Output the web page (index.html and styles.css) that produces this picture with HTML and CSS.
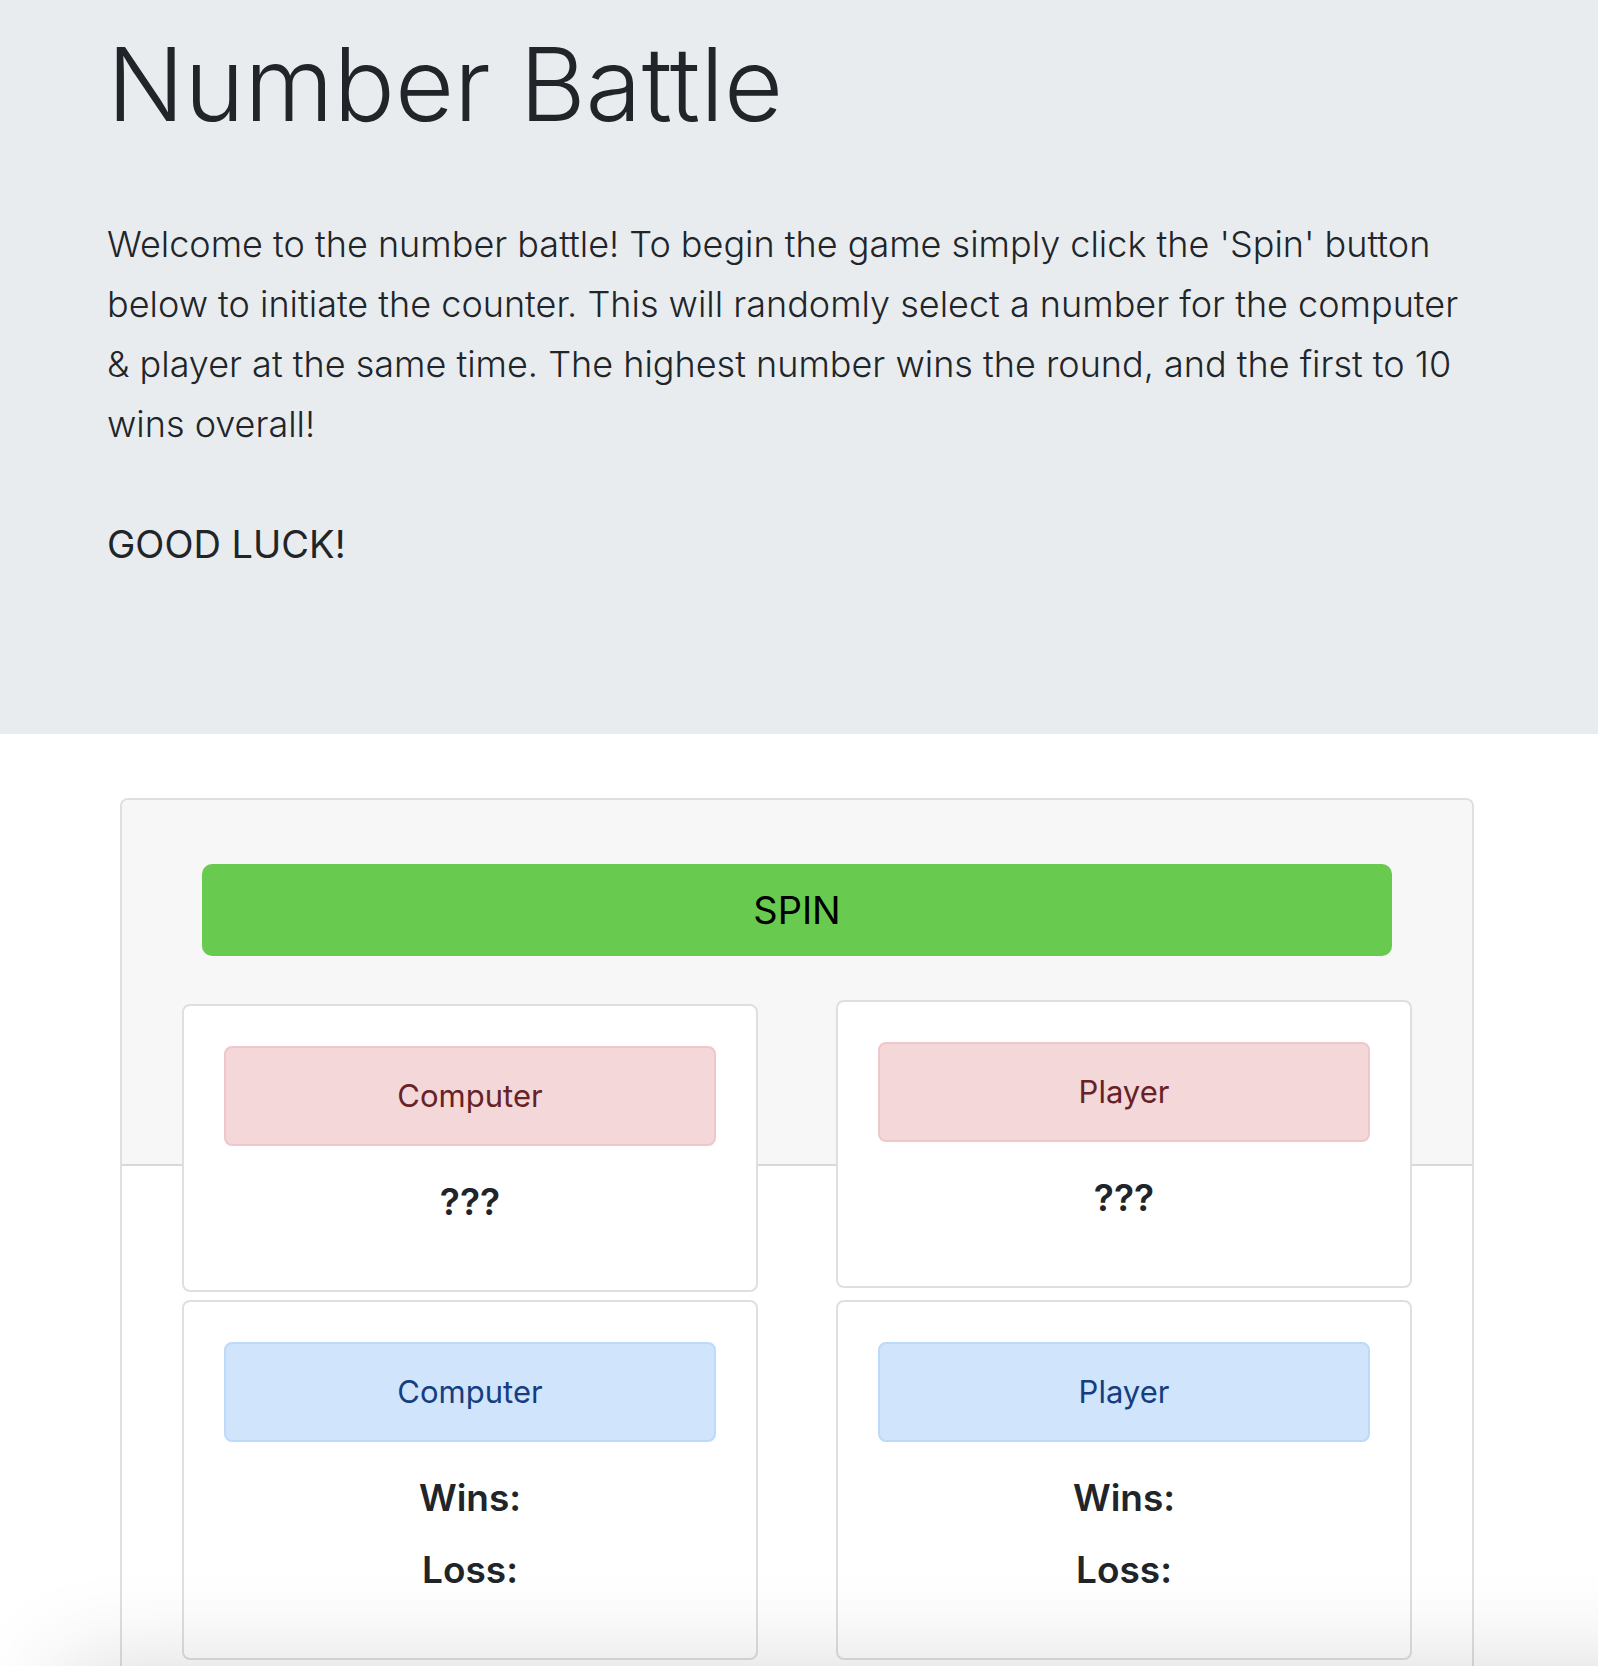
FILE: index.html
```html
<!DOCTYPE html>
<html lang="en">
<head>
  <meta charset="utf-8">
  <meta name="viewport" content="width=device-width, initial-scale=1">
  <title>Number Battle</title>
  <link rel="stylesheet" href="styles.css">
</head>
<body>
  <header class="hero">
    <h1 class="hero-title">Number Battle</h1>
    <p class="lead">Welcome to the number battle! To begin the game simply click the 'Spin' button below to initiate the counter. This will randomly select a number for the computer &amp; player at the same time. The highest number wins the round, and the first to 10 wins overall!</p>
    <p class="lead luck">GOOD LUCK!</p>
  </header>
  <main class="game">
    <div class="board">
      <div class="board-header">
        <button type="button" class="spin">SPIN</button>
      </div>
      <div class="columns">
        <div class="column column-computer">
          <section class="card">
            <div class="alert alert-danger">Computer</div>
            <h2 class="value">???</h2>
          </section>
          <section class="card">
            <div class="alert alert-primary">Computer</div>
            <h2 class="value">Wins:</h2>
            <h2 class="value">Loss:</h2>
          </section>
        </div>
        <div class="column column-player">
          <section class="card">
            <div class="alert alert-danger">Player</div>
            <h2 class="value">???</h2>
          </section>
          <section class="card">
            <div class="alert alert-primary">Player</div>
            <h2 class="value">Wins:</h2>
            <h2 class="value">Loss:</h2>
          </section>
        </div>
      </div>
    </div>
  </main>
  <div class="bottom-shade"></div>
</body>
</html>
```
FILE: styles.css
```css
* {
  box-sizing: border-box;
}

body {
  margin: 0;
  min-height: 100vh;
  display: flex;
  flex-direction: column;
  background: #fff;
  color: #212529;
  font-family: Inter, "Liberation Sans", sans-serif;
  font-size: 31px;
  line-height: 48px;
}

h1, h2, p {
  margin: 0;
}

.hero {
  padding: 16px 124px 160px 107px;
  background: #e8ecef;
}

.hero-title {
  margin-bottom: 62px;
  font-size: 102px;
  font-weight: 300;
  line-height: 136px;
}

.lead {
  margin-bottom: 60px;
  font-size: 36px;
  font-weight: 300;
  line-height: 60px;
}

.luck {
  margin-bottom: 0;
  font-size: 38px;
  font-weight: 400;
}

.game {
  flex: 1;
  display: flex;
  padding: 64px 124px 0 120px;
}

.board {
  flex: 1;
  border: 2px solid #dfdfdf;
  border-bottom: 0;
  border-radius: 8px 8px 0 0;
}

.board-header {
  height: 366px;
  padding: 64px 80px 0;
  background: #f7f7f7;
  border-bottom: 2px solid #d8d8d8;
  border-radius: 6px 6px 0 0;
}

.spin {
  display: block;
  width: 100%;
  padding: 16px;
  border: 0;
  border-radius: 10px;
  background: #68cb4f;
  color: #000;
  font: inherit;
  font-size: 38px;
  line-height: 60px;
}

.columns {
  display: grid;
  grid-template-columns: 1fr 1fr;
  gap: 78px;
  margin-top: -166px;
  padding: 0 60px 6px;
}

.column {
  display: flex;
  flex-direction: column;
}

.column-computer {
  gap: 8px;
  padding-top: 4px;
}

.column-player {
  gap: 12px;
}

.card {
  padding: 40px 40px 64px;
  border: 2px solid #dfdfdf;
  border-radius: 8px;
  background: #fff;
  text-align: center;
}

.alert {
  margin-bottom: 32px;
  padding: 24px;
  border: 2px solid;
  border-radius: 8px;
  line-height: 48px;
}

.alert-danger {
  border-color: #efc7cb;
  background: #f3d7d9;
  color: #672127;
}

.alert-primary {
  border-color: #bddafb;
  background: #d0e4fb;
  color: #153e80;
}

.value {
  font-size: 37px;
  font-weight: 600;
  line-height: 48px;
}

.value + .value {
  margin-top: 24px;
}

/* Soft shade rising from below the window's lower edge */
.bottom-shade {
  position: fixed;
  top: 100%;
  left: 60px;
  right: -200px;
  height: 300px;
  box-shadow: 0 0 90px rgba(0, 0, 0, 0.15);
  pointer-events: none;
}
```
